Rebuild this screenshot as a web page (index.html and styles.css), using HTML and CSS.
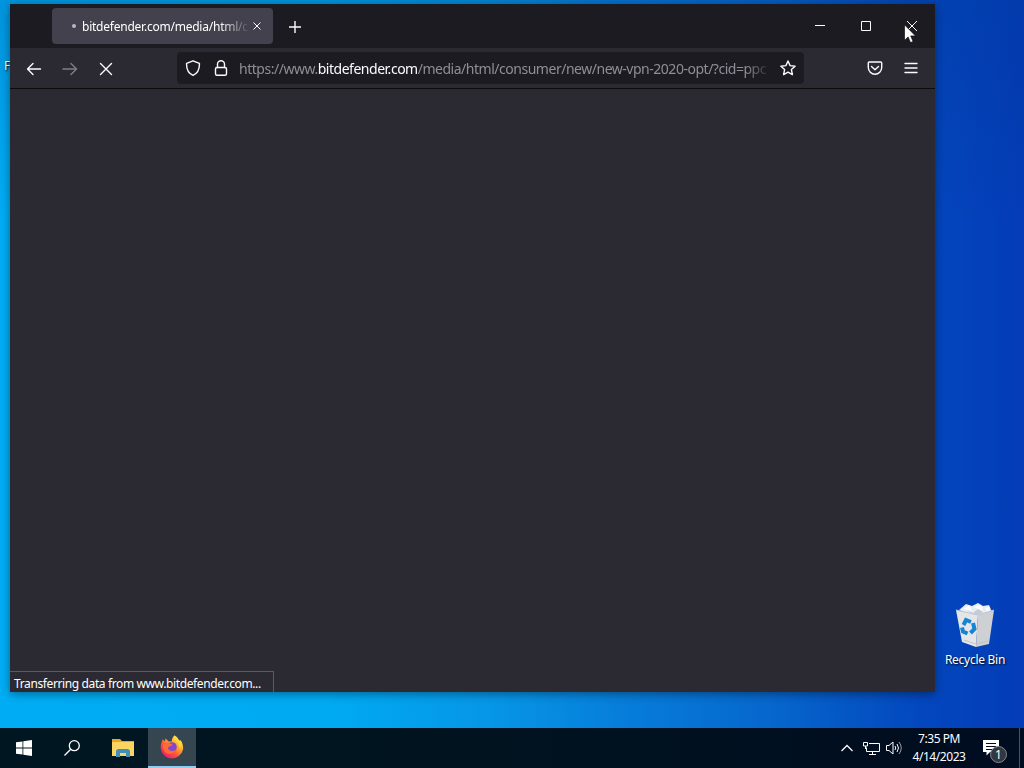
FILE: index.html
```html
<!DOCTYPE html>
<html lang="en">
<head>
  <meta charset="UTF-8">
  <meta name="viewport" content="width=device-width, initial-scale=1.0">
  <title>Desktop</title>
  <link rel="stylesheet" href="styles.css">
</head>
<body>
  <div class="desktop">
    <span class="hidden-label">F</span>

    <div class="recycle-bin">
      <svg width="42" height="46" viewBox="0 0 42 46">
        <path d="M5 8 L12 2 L18 4 L24 1 L29 4 L35 3 L38 10 L20 15Z" fill="#e9edf2"/>
        <path d="M9 7l6-4 3 6zM20 5l7-2 2 6zM31 6l5-1-2 6z" fill="#fff"/>
        <path d="M13 8l6 3 5-4 5 3-7 5z" fill="#c3cbd6"/>
        <path d="M2 8 L24 13 L22 45 L8 40Z" fill="#e4e5e7"/>
        <path d="M24 13 L40 8 L35 42 L22 45Z" fill="#cfd0d3"/>
        <path d="M2 8L24 13L40 8" fill="none" stroke="#b9c6dc"/>
        <path d="M10 38l12 4 12-3" fill="none" stroke="#c2c4c8"/>
        <g fill="none" stroke="#1683d4" stroke-width="4">
          <path d="M9.500 23l2.500-5 5 2"/>
          <path d="M19 21l1.500 6-4 4"/>
          <path d="M13.500 31.500l-4.500-2-1-4"/>
        </g>
      </svg>
      <span>Recycle Bin</span>
    </div>

    <div class="window">
      <div class="title-bar">
        <div class="tab">
          <span class="tab-dot"></span>
          <span class="tab-title">bitdefender.com/media/html/c</span>
          <svg class="tab-close" width="8" height="8" viewBox="0 0 8 8"><path d="M.5 .5l7 7M7.5 .5l-7 7"/></svg>
        </div>
        <svg class="new-tab" width="12" height="12" viewBox="0 0 12 12"><path d="M6 0v12M0 6h12"/></svg>
        <div class="window-buttons">
          <svg width="46" height="44" viewBox="0 0 46 44"><path d="M18 21.500h10"/></svg>
          <svg width="46" height="44" viewBox="0 0 46 44"><path d="M18.500 17.500h9v9h-9z"/></svg>
          <svg width="46" height="44" viewBox="0 0 46 44"><path d="M18 17l10 10M28 17l-10 10"/></svg>
        </div>
      </div>

      <div class="nav-bar">
        <div class="nav-buttons">
          <svg width="16" height="16" viewBox="0 0 16 16"><path d="M14.500 8H1.500M7 2.500L1.500 8 7 13.500"/></svg>
          <svg class="disabled" width="16" height="16" viewBox="0 0 16 16"><path d="M1 8h13.500M9 2.500L14.500 8 9 13.500"/></svg>
          <svg width="16" height="16" viewBox="0 0 16 16"><path d="M2.500 2.500l11 11M13.500 2.500l-11 11"/></svg>
        </div>
        <div class="url-bar">
          <svg width="16" height="16" viewBox="0 0 16 16"><path d="M8 .8L14.400 3.300C14.700 9 12.500 13.300 8 15.300 3.500 13.300 1.300 9 1.600 3.300Z"/></svg>
          <svg width="16" height="16" viewBox="0 0 16 16"><rect x="2.500" y="7.500" width="11" height="7.800" rx="1.500"/><path d="M4.500 7.500V4.200a3.500 3.500 0 0 1 7 0v3.300"/></svg>
          <span class="url">https://www.<b>bitdefender.com</b>/media/html/consumer/new/new-vpn-2020-opt/?cid=ppc</span>
          <svg width="16" height="16" viewBox="0 0 16 16"><path d="M8 1l2.100 4.600 5 .6-3.700 3.400 1 5L8 12.100l-4.400 2.500 1-5L.9 6.200l5-.6z"/></svg>
        </div>
        <div class="nav-tools">
          <svg width="16" height="16" viewBox="0 0 16 16"><path d="M2.300 2h11.400a1 1 0 0 1 1 1v4.500a6.700 6.700 0 0 1-13.400 0V3a1 1 0 0 1 1-1zM4.500 6.500L8 9.800l3.500-3.300"/></svg>
          <svg width="16" height="16" viewBox="0 0 16 16"><path d="M2 3.500h12M2 8h12M2 12.500h12"/></svg>
        </div>
      </div>

      <div class="page">
        <div class="status">Transferring data from www.bitdefender.com...</div>
      </div>
    </div>
  </div>

  <div class="taskbar">
    <div class="task">
      <svg width="16" height="16" viewBox="0 0 16 16"><path fill="#fff" d="M0 2.300L6.500 1.400V7.600H0zM7.300 1.300L16 0V7.600H7.300zM0 8.400H6.500V14.600L0 13.700zM7.300 8.400H16V16L7.300 14.700z"/></svg>
    </div>
    <div class="task">
      <svg width="16" height="16" viewBox="0 0 16 16"><g fill="none" stroke="#fff" stroke-width="1.300"><circle cx="10.300" cy="5.700" r="5"/><path d="M6.700 9.300L.5 15.500"/></g></svg>
    </div>
    <div class="task folder">
      <svg width="22" height="18" viewBox="0 0 22 18"><path d="M0 0h8l2 2h12v15H0z" fill="#e7a823"/><path d="M0 3h22v14H0z" fill="#fcd462"/><path d="M4 18v-6.500l2-1.500h10l2 1.500V18h-4v-4H8v4z" fill="#3f8fb8"/></svg>
    </div>
    <div class="task active">
      <svg width="24" height="24" viewBox="0 0 24 24">
        <defs>
          <linearGradient id="fire" x1="0.850" y1="0.100" x2="0.200" y2="0.900">
            <stop offset="0" stop-color="#fff04a"/>
            <stop offset=".4" stop-color="#ff9a2a"/>
            <stop offset=".7" stop-color="#ff4a3d"/>
            <stop offset="1" stop-color="#ee1f70"/>
          </linearGradient>
        </defs>
        <path d="M14.500 .5c3 1.600 4 4 4.500 5.500 1-.2 1.500-1 1.500-1 2 3 3 6 2.500 9.500A11.300 11.300 0 0 1 .7 13C.4 9.500 2 7 2.700 4.300l2 2 1-2.800 3 3h3c0-2.500 1-4.500 2.800-6z" fill="url(#fire)"/>
        <circle cx="12" cy="12" r="4.800" fill="#8149cf"/>
        <path d="M3 9c3-2 6-1.500 9.500.5-1 2-4 1.500-4.500 3.500 0 2.500 4 4 7 2-1 4-7 5.500-10 2C3 15 2.500 12 3 9z" fill="#ff6a36"/>
        <path d="M14 4c3 3 6 5 5.500 10 3-4 1-8-1-9.500C18 3 16 1.500 14.500.5 13.500 2 13.500 3 14 4z" fill="#ffd83d"/>
      </svg>
    </div>

    <div class="tray">
      <svg class="chevron" width="12" height="8" viewBox="0 0 12 8"><path d="M.5 7L6 1.500 11.500 7"/></svg>
      <svg width="17" height="15" viewBox="0 0 17 15"><path d="M6 2.500h10.500v8H3.500V6.500M9.500 10.500v3M6 13.500h7M.5 1.500h4v3.500h-4zM2.500 5v3"/></svg>
      <svg width="16" height="14" viewBox="0 0 16 14"><path d="M.5 4.500h2.500l4-3.500v12l-4-3.500H.5zM9 5q1.500 2 0 4M11 3q3 4 0 8"/><path d="M13 1q4.500 6 0 12" opacity=".6"/></svg>
      <div class="clock">
        <span>7:35 PM</span>
        <span>4/14/2023</span>
      </div>
      <div class="notifications">
        <svg width="16" height="16" viewBox="0 0 16 16"><path class="bubble" d="M0 0h16v12H7l-3.500 3.500V12H0z"/><path class="lines" d="M3 3.500h10M3 6.500h10M3 9.500h6"/></svg>
        <span class="badge">1</span>
      </div>
    </div>
    <div class="show-desktop"></div>
  </div>

  <svg class="cursor" width="12" height="20" viewBox="0 0 12 20"><path d="M.5 .8v15.500l3.600-3.400 2.400 5.700 2.600-1.100-2.400-5.600h4.800z" fill="#fff" stroke="#111" stroke-width=".7"/></svg>
</body>
</html>
```

FILE: styles.css
```css
* {
  box-sizing: border-box;
}

body {
  margin: 0;
  width: 1024px;
  height: 768px;
  overflow: hidden;
  display: flex;
  flex-direction: column;
  font-family: "Noto Sans", sans-serif;
  font-size: 12px;
  color: #fff;
}

svg {
  display: block;
  flex-shrink: 0;
}

.desktop {
  position: relative;
  height: 728px;
  padding: 4px 0 0 10px;
  background:
    linear-gradient(180deg, rgba(0, 50, 130, 0.2), transparent 30%),
    linear-gradient(90deg, #00adf5 0%, #00aaf3 32%, #0696e6 48%, #067fdb 60%, #0667cd 75%, #0347be 90%, #033cb6 100%);
}

.window {
  position: relative;
  width: 925px;
  height: 688px;
  display: flex;
  flex-direction: column;
  background: #2b2a33;
  box-shadow: 0 2px 9px rgba(0, 0, 0, 0.4);
}

.title-bar {
  display: flex;
  align-items: center;
  height: 44px;
  padding-left: 42px;
  background: #1c1b22;
}

.tab {
  display: flex;
  align-items: center;
  width: 221px;
  height: 36px;
  padding: 0 12px 0 20px;
  border-radius: 4px;
  background: #42414d;
}

.tab-dot {
  width: 4px;
  height: 4px;
  margin-right: 6px;
  border-radius: 50%;
  background: #b8b7c0;
}

.tab-title {
  width: 168px;
  padding-top: 1px;
  white-space: nowrap;
  letter-spacing: -0.23px;
  -webkit-mask-image: linear-gradient(90deg, #000 82%, transparent 100%);
  mask-image: linear-gradient(90deg, #000 82%, transparent 100%);
}

.tab-close,
.new-tab,
.window-buttons svg,
.nav-bar svg,
.tray svg {
  fill: none;
  stroke: #fbfbfe;
}

.tab-close {
  margin-left: 3px;
}

.new-tab {
  margin: 1px 0 0 16px;
  stroke-width: 1.4;
}

.window-buttons {
  display: flex;
  margin-left: auto;
}

.nav-bar {
  display: flex;
  align-items: center;
  height: 41px;
  padding: 0 16px;
  border-bottom: 1px solid #0c0c0d;
}

.nav-bar svg {
  stroke-width: 1.4;
  stroke-linejoin: round;
  stroke-linecap: round;
}

.nav-bar .disabled {
  opacity: 0.4;
}

.nav-buttons {
  display: flex;
  gap: 20px;
  width: 151px;
  padding-top: 1px;
}

.url-bar {
  display: flex;
  align-items: center;
  width: 627px;
  height: 32px;
  padding: 0 8px;
  border-radius: 4px;
  background: #1c1b22;
}

.url-bar svg + svg {
  margin-left: 12px;
}

.url {
  width: 533px;
  margin: 1px 8px 0 10px;
  white-space: nowrap;
  font-size: 14px;
  letter-spacing: -0.48px;
  color: #8f8e97;
  -webkit-mask-image: linear-gradient(90deg, #000 95%, transparent 100%);
  mask-image: linear-gradient(90deg, #000 95%, transparent 100%);
}

.url b {
  font-weight: normal;
  color: #fbfbfe;
}

.nav-tools {
  display: flex;
  gap: 20px;
  margin-left: auto;
}

.page {
  flex: 1;
  display: flex;
  align-items: flex-end;
}

.status {
  width: 264px;
  height: 21px;
  padding: 0 4px;
  border: 1px solid #5b5a64;
  border-left: 0;
  border-bottom: 0;
  line-height: 23px;
  letter-spacing: -0.38px;
  white-space: nowrap;
}

.recycle-bin {
  position: absolute;
  left: 935px;
  top: 602px;
  width: 80px;
  display: flex;
  flex-direction: column;
  align-items: center;
  text-shadow: 1px 1px 2px #000;
}

.recycle-bin span {
  margin-top: 3px;
  line-height: 18px;
  letter-spacing: -0.27px;
  white-space: nowrap;
}

.hidden-label {
  position: absolute;
  left: 4px;
  top: 57px;
  text-shadow: 1px 1px 2px #000;
}

.taskbar {
  display: flex;
  height: 40px;
  background: linear-gradient(90deg, #001722, #00131f 50%, #000c20);
}

.task {
  display: flex;
  align-items: center;
  justify-content: center;
  width: 48px;
  height: 40px;
}

.folder {
  width: 52px;
  padding-left: 1px;
}

.active {
  background: #354650;
  border-bottom: 2px solid #8fcdf2;
}

.tray {
  display: flex;
  align-items: center;
  margin-left: auto;
}

.tray .chevron {
  stroke-width: 1.3;
}

.tray svg + svg {
  margin-left: 10px;
}

.tray svg:nth-child(3) {
  margin-left: 6px;
}

.clock {
  display: flex;
  flex-direction: column;
  align-items: center;
  width: 58px;
  margin-left: 8px;
  line-height: 18px;
  letter-spacing: -0.45px;
}

.notifications {
  position: relative;
  margin-left: 15px;
}

.tray .bubble {
  fill: #fff;
  stroke: none;
}

.tray .lines {
  stroke: #000c20;
}

.badge {
  position: absolute;
  left: 7px;
  top: 6px;
  width: 17px;
  height: 17px;
  border: 1px solid #85888f;
  border-radius: 50%;
  background: #33373f;
  text-align: center;
  line-height: 15px;
}

.show-desktop {
  width: 5px;
  margin-left: 20px;
  border-left: 1px solid #4b5360;
}

.cursor {
  position: absolute;
  left: 904px;
  top: 24px;
}
```
